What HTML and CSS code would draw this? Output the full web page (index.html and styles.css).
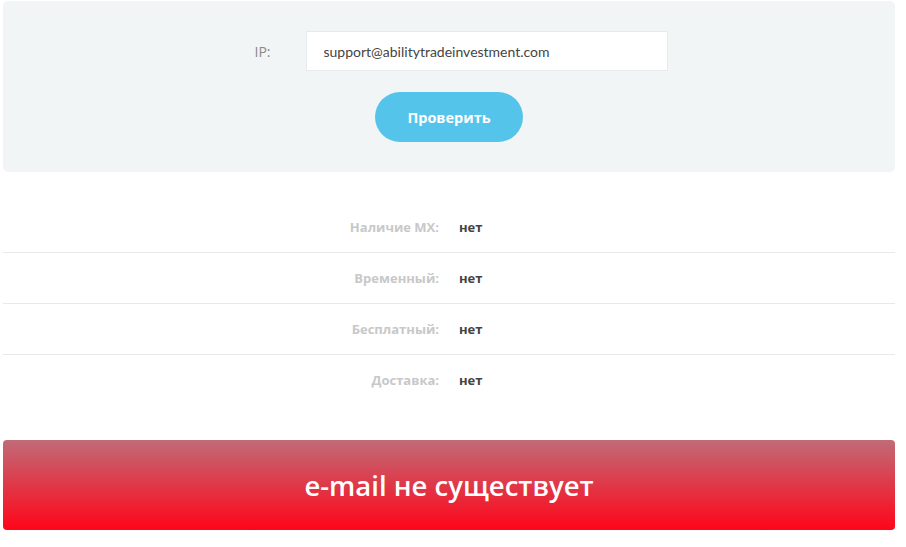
FILE: index.html
```html
<!DOCTYPE html>
<html lang="ru">
<head>
  <meta charset="UTF-8">
  <meta name="viewport" content="width=device-width, initial-scale=1.0">
  <title>Проверка e-mail</title>
  <link rel="stylesheet" href="styles.css">
</head>
<body>
  <div class="wrap">
    <div class="check-form">
      <div class="field">
        <label for="ip">IP:</label>
        <input type="text" id="ip" value="support@abilitytradeinvestment.com">
      </div>
      <button class="btn-check">Проверить</button>
    </div>

    <div class="results">
      <div class="row"><span class="name">Наличие MX:</span><span class="val">нет</span></div>
      <div class="row"><span class="name">Временный:</span><span class="val">нет</span></div>
      <div class="row"><span class="name">Бесплатный:</span><span class="val">нет</span></div>
      <div class="row"><span class="name">Доставка:</span><span class="val">нет</span></div>
    </div>

    <div class="verdict">e-mail не существует</div>
  </div>
</body>
</html>
```

FILE: styles.css
```css
body {
  margin: 0;
  padding: 0;
  background: #fff;
  font-family: "Open Sans", Arial, sans-serif;
  color: #444;
}
.wrap {
  padding: 1px 11px 0 3px;
}
.check-form {
  background: #f2f5f6;
  border-radius: 5px;
  height: 171px;
  box-sizing: border-box;
  padding-top: 30px;
  display: flex;
  flex-direction: column;
  align-items: center;
}
.field {
  display: flex;
  align-items: center;
  margin-left: 24px;
}
.field label {
  width: 51px;
  font-size: 14px;
  color: #888;
}
.field input {
  width: 362px;
  height: 40px;
  box-sizing: border-box;
  border: 1px solid #e6eaec;
  background: #fff;
  padding: 0 17px;
  font-family: Lato, "Open Sans", Arial, sans-serif;
  font-size: 14px;
  color: #444;
  outline: none;
}
.btn-check {
  margin-top: 21px;
  width: 148px;
  height: 50px;
  border: none;
  border-radius: 25px;
  background: #55c4ea;
  color: #fff;
  font-family: "Open Sans", Arial, sans-serif;
  font-weight: 700;
  font-size: 14.5px;
  cursor: pointer;
}
.results {
  margin-top: 30px;
}
.row {
  display: grid;
  grid-template-columns: 436px 1fr;
  column-gap: 20px;
  align-items: center;
  height: 50px;
  border-bottom: 1px solid #e9e9e9;
  font-size: 13px;
  font-weight: 700;
}
.row:last-child {
  border-bottom: none;
}
.row .name {
  text-align: right;
  color: #c8c8c8;
}
.row .val {
  color: #444;
}
.verdict {
  margin-top: 35px;
  height: 90px;
  border-radius: 4px;
  background: linear-gradient(to bottom, #c06b77, #ff0519);
  color: #fff;
  font-size: 27.5px;
  font-weight: 600;
  display: flex;
  align-items: center;
  justify-content: center;
}
```
